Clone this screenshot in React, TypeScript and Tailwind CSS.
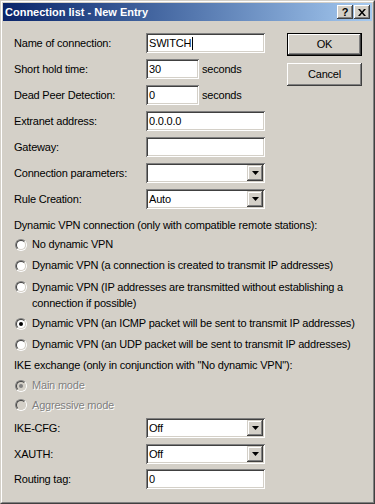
import React from "react";

const sunken =
  "bg-white shadow-[inset_1px_1px_0_#808080,inset_-1px_-1px_0_#fff,inset_2px_2px_0_#404040,inset_-2px_-2px_0_#d4d0c8]";
const pushBtn =
  "bg-[#d4d0c8] shadow-[inset_-1px_-1px_0_#404040,inset_1px_1px_0_#fff,inset_-2px_-2px_0_#808080,inset_2px_2px_0_#d4d0c8]";
const arrowBtn =
  "bg-[#d4d0c8] shadow-[inset_-1px_-1px_0_#404040,inset_1px_1px_0_#d4d0c8,inset_-2px_-2px_0_#808080,inset_2px_2px_0_#fff]";

function TextField({ value, caret, className }: { value: string; caret?: boolean; className: string }) {
  return (
    <div className={`${sunken} ${className} h-[20px] flex items-center pl-[3px] whitespace-nowrap`}>
      <span>{value}</span>
      {caret && <span className="inline-block w-px h-[13px] bg-black ml-[1px]" />}
    </div>
  );
}

function Combo({ value }: { value: string }) {
  return (
    <div className={`${sunken} w-[119px] h-[20px] flex items-center p-[2px]`}>
      <span className="flex-1 pl-[1px]">{value}</span>
      <div className={`${arrowBtn} w-[16px] h-[16px] flex items-center justify-center`}>
        <svg width="7" height="4" viewBox="0 0 7 4">
          <path d="M0 0h7L3.5 4z" fill="#000" />
        </svg>
      </div>
    </div>
  );
}

function Row({ label, children }: { label: string; children: React.ReactNode }) {
  return (
    <div className="flex items-center h-[20px]">
      <span className="w-[132px] shrink-0 whitespace-nowrap">{label}</span>
      {children}
    </div>
  );
}

function RadioDot({ checked, disabled }: { checked?: boolean; disabled?: boolean }) {
  return (
    <div className="w-[12px] h-[12px] shrink-0 rounded-full border border-t-[#808080] border-l-[#808080] border-r-white border-b-white">
      <div
        className={`w-full h-full rounded-full border border-t-[#404040] border-l-[#404040] border-r-[#d4d0c8] border-b-[#d4d0c8] flex items-center justify-center ${
          disabled ? "bg-[#d4d0c8]" : "bg-white"
        }`}
      >
        {checked && <div className={`w-[4px] h-[4px] rounded-full ${disabled ? "bg-[#808080]" : "bg-black"}`} />}
      </div>
    </div>
  );
}

function Radio({
  children,
  checked,
  disabled,
  h,
}: {
  children: React.ReactNode;
  checked?: boolean;
  disabled?: boolean;
  h: string;
}) {
  return (
    <div className={`flex items-center pl-[1px] gap-[5px] ${h}`}>
      <RadioDot checked={checked} disabled={disabled} />
      <span
        className={`whitespace-nowrap ${disabled ? "text-[#808080] [text-shadow:1px_1px_0_#fff]" : ""}`}
      >
        {children}
      </span>
    </div>
  );
}

export default function App() {
  return (
    <div className="w-[375px] h-[504px] flex border border-t-[#d4d0c8] border-l-[#d4d0c8] border-r-[#404040] border-b-[#404040] font-['Liberation_Sans',Arial,sans-serif] text-[11px] text-black">
      <div className="flex-1 flex flex-col border border-t-white border-l-white border-r-[#808080] border-b-[#808080] p-[1px] bg-[#d4d0c8]">
        {/* title bar */}
        <div className="h-[18px] flex items-center bg-gradient-to-r from-[#0a246a] to-[#a6caf0] pl-[2px] pr-[2px]">
          <span className="flex-1 text-white font-bold whitespace-nowrap">Connection list - New Entry</span>
          <div className={`${pushBtn} w-[16px] h-[14px] flex items-center justify-center font-bold text-[11px] leading-none`}>?</div>
          <div className={`${pushBtn} w-[16px] h-[14px] flex items-center justify-center ml-px`}>
            <svg width="8" height="7" viewBox="0 0 8 7">
              <path d="M0 0h2l2 2.5L6 0h2L5 3.5 8 7H6L4 4.5 2 7H0l3-3.5z" fill="#000" />
            </svg>
          </div>
        </div>

        <div className="flex flex-col pl-[11px] tracking-[-0.2px]">
          <div className="flex pt-[12px]">
            <div className="flex flex-col gap-[6px] w-[251px]">
              <Row label="Name of connection:">
                <TextField value="SWITCH" caret className="w-[119px]" />
              </Row>
              <Row label="Short hold time:">
                <TextField value="30" className="w-[53px]" />
                <span className="ml-[3px]">seconds</span>
              </Row>
              <Row label="Dead Peer Detection:">
                <TextField value="0" className="w-[53px]" />
                <span className="ml-[3px]">seconds</span>
              </Row>
              <Row label="Extranet address:">
                <TextField value="0.0.0.0" className="w-[119px]" />
              </Row>
              <Row label="Gateway:">
                <TextField value="" className="w-[119px]" />
              </Row>
              <Row label="Connection parameters:">
                <Combo value="" />
              </Row>
              <Row label="Rule Creation:">
                <Combo value="Auto" />
              </Row>
            </div>
            <div className="flex flex-col gap-[7px] ml-[22px]">
              <div className="w-[75px] h-[23px] border border-black">
                <div className={`${pushBtn} w-full h-full flex items-center justify-center`}>OK</div>
              </div>
              <div className={`${pushBtn} w-[75px] h-[23px] flex items-center justify-center`}>Cancel</div>
            </div>
          </div>

          <div className="mt-[8px] h-[17px] flex items-center whitespace-nowrap">
            Dynamic VPN connection (only with compatible remote stations):
          </div>
          <Radio h="h-[21px]">No dynamic VPN</Radio>
          <Radio h="h-[21px]">Dynamic VPN (a connection is created to transmit IP addresses)</Radio>
          <div className="flex items-start pl-[1px] gap-[5px] h-[37px] pt-[3px]">
            <div className="mt-[2px]">
              <RadioDot />
            </div>
            <span className="whitespace-nowrap leading-[16px]">
              Dynamic VPN (IP addresses are transmitted without establishing a
              <br />
              connection if possible)
            </span>
          </div>
          <Radio h="h-[21px]" checked>
            Dynamic VPN (an ICMP packet will be sent to transmit IP addresses)
          </Radio>
          <Radio h="h-[21px]">Dynamic VPN (an UDP packet will be sent to transmit IP addresses)</Radio>
          <div className="h-[21px] flex items-center whitespace-nowrap">
            IKE exchange (only in conjunction with "No dynamic VPN"):
          </div>
          <Radio h="h-[19px]" checked disabled>
            Main mode
          </Radio>
          <Radio h="h-[20px]" disabled>
            Aggressive mode
          </Radio>

          <div className="flex flex-col mt-[3px]">
            <Row label="IKE-CFG:">
              <Combo value="Off" />
            </Row>
            <div className="mt-[6px]">
              <Row label="XAUTH:">
                <Combo value="Off" />
              </Row>
            </div>
            <div className="mt-[5px]">
              <Row label="Routing tag:">
                <TextField value="0" className="w-[119px]" />
              </Row>
            </div>
          </div>
        </div>
      </div>
    </div>
  );
}
